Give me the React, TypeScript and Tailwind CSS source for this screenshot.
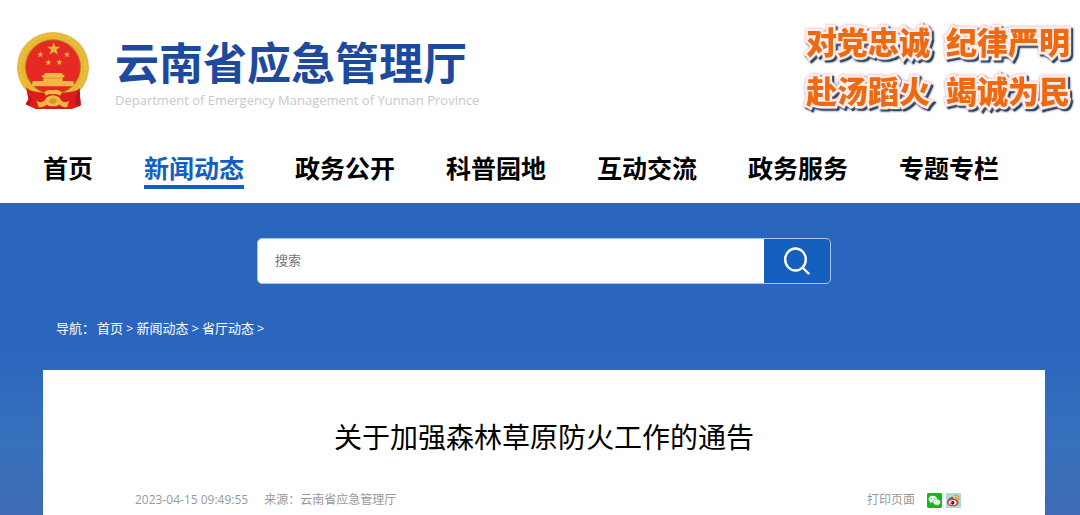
import type { ReactNode } from 'react'

const NAV_ITEMS = ['首页', '新闻动态', '政务公开', '科普园地', '互动交流', '政务服务', '专题专栏']
const ACTIVE_ITEM = '新闻动态'

const SLOGANS = [
  ['对党忠诚', '纪律严明'],
  ['赴汤蹈火', '竭诚为民'],
]

const CRUMBS = ['首页', '新闻动态', '省厅动态']

function Star({ x, y, r }: { x: number; y: number; r: number }) {
  const points = Array.from({ length: 10 }, (_, i) => {
    const radius = i % 2 === 0 ? r : r * 0.4
    const angle = (Math.PI / 5) * i - Math.PI / 2
    return `${x + radius * Math.cos(angle)},${y + radius * Math.sin(angle)}`
  }).join(' ')
  return <polygon points={points} fill="#e9b53a" />
}

function Emblem() {
  return (
    <svg viewBox="51 35 216 231" className="h-[77px] w-[72px] shrink-0" aria-hidden="true">
      <path d="M78 196 L86 238 L77 252 L108 266 H214 L242 256 L238 204 Z" fill="#d81c1c" />
      <ellipse cx="159" cy="141" rx="108" ry="106" fill="#e6b736" />
      <ellipse cx="159" cy="141" rx="99" ry="97" fill="none" stroke="#ebc145" strokeWidth="7" strokeDasharray="9 5" />
      <ellipse cx="159" cy="140" rx="84" ry="83" fill="#b9791c" />
      <ellipse cx="159" cy="140" rx="81" ry="80" fill="#e42a22" />
      <Star x={161} y={86} r={21} />
      <Star x={121} y={103} r={10} />
      <Star x={201} y={103} r={10} />
      <Star x={145} y={127} r={10} />
      <Star x={178} y={126} r={10} />
      {/* gate tower */}
      <path
        d="M135 158 H186 L189 165 H193 V171 H188 V182 H220 L223 198 H95 L98 182 H130 V171 H126 V165 H132 Z"
        fill="#efb844"
      />
      <path d="M130 174 H188" stroke="#d98a2c" strokeWidth="2" />
      {/* ribbons and cog */}
      <path d="M78 200 Q92 214 108 214 L132 218 L159 210 L186 218 L212 214 Q228 214 238 204 L242 254 L214 266 H108 L77 252 L87 236 Z" fill="#dd1c1d" />
      <path d="M78 200 Q80 222 96 234 L86 256 L77 250 L86 236 Z M238 204 L242 254 L228 258 L226 232 Z" fill="#b8161a" />
      <path d="M132 216 Q146 204 159 210 Q172 204 186 216 L180 226 Q170 218 159 222 Q148 218 138 226 Z" fill="#efbd46" />
      <ellipse cx="159" cy="242" rx="24" ry="17" fill="#efbd46" />
      <ellipse cx="159" cy="242" rx="11" ry="8" fill="#d9962b" />
      <path d="M109 240 Q122 252 136 238 L140 254 Q124 264 116 260 Z M207 240 Q196 252 182 238 L178 254 Q194 264 202 260 Z" fill="#e9b53a" />
      <path d="M104 266 Q159 250 214 266 Z" fill="#c7211c" />
    </svg>
  )
}

function SearchIcon() {
  return (
    <svg viewBox="0 0 28 28" className="size-7" fill="none" stroke="white" strokeWidth="2.4" strokeLinecap="round" aria-hidden="true">
      <ellipse cx="12.5" cy="12.5" rx="10.3" ry="11" />
      <path d="M20 21 L25.5 26.5" />
    </svg>
  )
}

function WechatIcon() {
  return (
    <svg viewBox="0 0 16 16" className="size-[15px]" aria-hidden="true">
      <rect width="16" height="16" rx="1.5" fill="#0dbc18" />
      <path d="M6.2 3 C3.6 3 1.7 4.6 1.7 6.6 C1.7 7.8 2.4 8.8 3.4 9.4 L3 10.8 L4.8 9.9 C5.3 10 5.8 10 6.3 10 C8.8 10 10.7 8.5 10.7 6.5 C10.7 4.5 8.7 3 6.2 3 Z" fill="white" />
      <path d="M10.4 6.4 C8.2 6.4 6.4 7.9 6.4 9.7 C6.4 11.5 8.2 13 10.4 13 C10.9 13 11.4 12.9 11.8 12.8 L13.3 13.6 L12.9 12.3 C13.9 11.7 14.5 10.8 14.5 9.7 C14.5 7.9 12.6 6.4 10.4 6.4 Z" fill="white" stroke="#0dbc18" strokeWidth="0.6" />
      <g fill="#0dbc18">
        <circle cx="4.7" cy="5.7" r="0.6" />
        <circle cx="7.7" cy="5.7" r="0.6" />
        <circle cx="9.2" cy="9" r="0.5" />
        <circle cx="11.8" cy="9" r="0.5" />
      </g>
    </svg>
  )
}

function WeiboIcon() {
  return (
    <svg viewBox="0 0 16 16" className="size-[15px]" aria-hidden="true">
      <rect width="16" height="16" rx="1" fill="#a5dbe8" />
      <path d="M9.5 2.6 Q13.8 2 14 6.6" fill="none" stroke="#f3a52c" strokeWidth="1.9" strokeLinecap="round" />
      <path d="M9.8 4.9 Q11.7 4.6 11.9 6.5" fill="none" stroke="#f3a52c" strokeWidth="1.3" strokeLinecap="round" />
      <path d="M5.8 4.2 C3.6 4.8 1.2 7.6 1.2 10 C1.2 12.6 4 14.2 7.2 14.2 C10.8 14.2 13.5 12.3 13.5 10 C13.5 8.5 12.4 7.8 11.3 7.5 C11.6 5.9 10.1 5.7 8 6.5 C8.2 4.8 7.3 3.8 5.8 4.2 Z" fill="#dc3b25" />
      <ellipse cx="7.1" cy="10.2" rx="4.2" ry="2.8" fill="white" />
      <circle cx="6.9" cy="10.3" r="2.1" fill="#222" />
      <circle cx="6.1" cy="9.8" r="0.7" fill="white" />
    </svg>
  )
}

function ShareButton({ label, children }: { label: string; children: ReactNode }) {
  return (
    <button type="button" aria-label={label} className="block">
      {children}
    </button>
  )
}

function Header() {
  return (
    <header className="flex items-start justify-between pt-[18px] pr-[10px] pl-[17px]">
      <div className="flex items-start gap-[26px]">
        <div className="pt-[14px]">
          <Emblem />
        </div>
        <div className="pt-5">
          <h1 className="text-[44px] leading-[50px] font-bold text-[#1d4a9c]">云南省应急管理厅</h1>
          <p className="pt-[3px] text-[13px] leading-[18px] text-[#c9c9c9]">
            Department of Emergency Management of Yunnan Province
          </p>
        </div>
      </div>
      <div className="text-[31px] leading-[49px] font-black text-[#ee6a12] [-webkit-text-stroke:5px_#fdeeee] [filter:drop-shadow(0_0_1px_#e89a9a)_drop-shadow(2px_2px_0_#1d3f5c)] [paint-order:stroke_fill]">
        {SLOGANS.map((line) => (
          <p key={line[0]} className="flex gap-4">
            {line.map((part) => (
              <span key={part}>{part}</span>
            ))}
          </p>
        ))}
      </div>
    </header>
  )
}

function MainNav() {
  return (
    <nav className="flex gap-[51px] pt-9 pb-[14px] pl-[43px]">
      {NAV_ITEMS.map((item) => (
        <a
          key={item}
          href="#"
          className={`border-b-4 pb-px text-[25px] leading-8 font-bold whitespace-nowrap ${
            item === ACTIVE_ITEM ? 'border-[#1560bf] text-[#1560bf]' : 'border-transparent text-black'
          }`}
        >
          {item}
        </a>
      ))}
    </nav>
  )
}

function SearchBar() {
  return (
    <form className="mx-auto flex h-[46px] w-full max-w-[574px] overflow-hidden rounded-[5px] border border-[#a9c3e8] bg-white">
      <input
        type="text"
        aria-label="搜索"
        placeholder="搜索"
        className="min-w-0 flex-1 px-[17px] text-[13px] outline-none placeholder:text-[#757575]"
      />
      <button type="submit" aria-label="提交搜索" className="flex w-[66px] items-center justify-center bg-[#1560bf]">
        <SearchIcon />
      </button>
    </form>
  )
}

function Breadcrumb() {
  return (
    <div className="flex gap-0.5 pt-[34px] pl-[13px] text-[13px] leading-5 text-white">
      <span>导航：</span>
      <div className="flex gap-[3px]">
        {CRUMBS.map((crumb) => (
          <span key={crumb} className="flex gap-[3px]">
            <a href="#">{crumb}</a>
            <span>&gt;</span>
          </span>
        ))}
      </div>
    </div>
  )
}

function Article() {
  return (
    <article className="mt-8 flex-1 bg-white pt-[46px] pr-[84px] pl-[92px]">
      <h2 className="pr-2 text-center text-[28px] leading-[42px] text-black">关于加强森林草原防火工作的通告</h2>
      <div className="flex items-center justify-between pt-8 text-xs leading-5 text-[#999]">
        <div className="flex gap-4">
          <time dateTime="2023-04-15T09:49:55">2023-04-15 09:49:55</time>
          <span>来源：云南省应急管理厅</span>
        </div>
        <div className="flex items-center">
          <button type="button">打印页面</button>
          <div className="flex gap-1 pl-3">
            <ShareButton label="微信">
              <WechatIcon />
            </ShareButton>
            <ShareButton label="微博">
              <WeiboIcon />
            </ShareButton>
          </div>
        </div>
      </div>
    </article>
  )
}

export default function App() {
  return (
    <div className="flex min-h-screen flex-col bg-white font-['Open_Sans','Noto_Sans_CJK_SC',sans-serif]">
      <Header />
      <MainNav />
      <main className="flex flex-1 flex-col bg-linear-to-b from-[#2a66be] from-45% via-[#3670bc] via-75% to-[#3e6bb4] pt-[35px] pr-[35px] pl-[43px]">
        <SearchBar />
        <Breadcrumb />
        <Article />
      </main>
    </div>
  )
}
